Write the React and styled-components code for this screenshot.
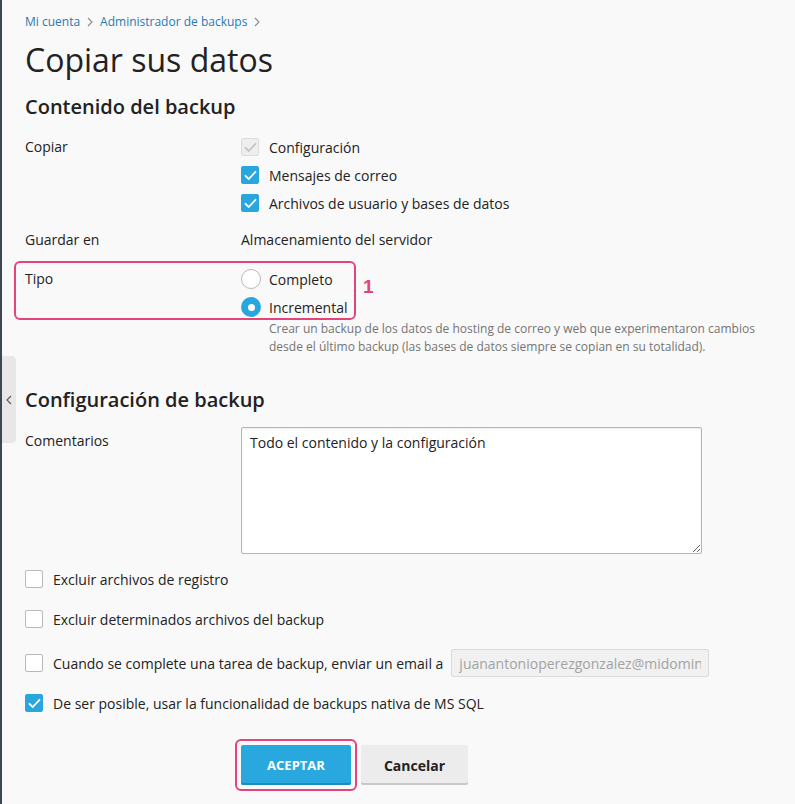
import React from "react";
import styled, { createGlobalStyle, css } from "styled-components";

const Global = createGlobalStyle`
  html, body { margin: 0; padding: 0; background: #f9f9f9; }
  body { font-family: "Open Sans", "Noto Sans", sans-serif; color: #222; font-size: 14px; }
  * { box-sizing: border-box; }
`;

const Shell = styled.div`
  position: relative;
  display: flex;
  min-height: 804px;
  background: #f9f9f9;
`;

const Rail = styled.div`
  width: 2px;
  flex: none;
  background: #3b4752;
`;

const SideTab = styled.button`
  position: absolute;
  left: 2px;
  top: 356px;
  width: 14px;
  height: 87px;
  border: none;
  padding: 0;
  background: #e7e7e7;
  border-radius: 0 4px 4px 0;
  display: flex;
  align-items: center;
  justify-content: center;
  color: #555;
`;

const Content = styled.main`
  flex: 1;
  padding: 14px 0 0 23px;
  display: flex;
  flex-direction: column;
`;

const Crumbs = styled.nav`
  display: flex;
  align-items: center;
  gap: 7px;
  font-size: 12px;
  line-height: 16px;
  height: 16px;
`;

const CrumbLink = styled.a`
  color: #1f7bb0;
  text-decoration: none;
`;

const CrumbSep = styled.span`
  color: #8a8a8a;
  display: inline-flex;
`;

const Title = styled.h1`
  margin: 10px 0 0;
  font-size: 32px;
  font-weight: 400;
  line-height: 40px;
  color: #222;
`;

const Heading = styled.h2`
  margin: ${(p) => p.$mt}px 0 0;
  font-size: 20px;
  font-weight: 600;
  line-height: 28px;
  color: #222;
`;

const Row = styled.div`
  position: relative;
  display: grid;
  grid-template-columns: 216px 1fr;
  margin-top: ${(p) => p.$mt || 0}px;
`;

const Label = styled.div`
  line-height: 28px;
  font-size: 14px;
  color: #222;
`;

const Field = styled.div`
  display: flex;
  flex-direction: column;
`;

const Option = styled.label`
  display: flex;
  align-items: center;
  gap: ${(p) => (p.$radio ? 8 : 10)}px;
  height: 28px;
  font-size: 14px;
  color: #222;
`;

const Value = styled.div`
  line-height: 28px;
`;

const Box = styled.span`
  width: 18px;
  height: 18px;
  flex: none;
  border-radius: 2px;
  display: inline-flex;
  align-items: center;
  justify-content: center;
  ${(p) =>
    p.$state === "on"
      ? css`
          background: #29a6de;
          border: 1px solid #29a6de;
          color: #fff;
        `
      : p.$state === "disabled"
      ? css`
          background: #eeeeee;
          border: 1px solid #dcdcdc;
          color: #c4c4c4;
        `
      : css`
          background: #fff;
          border: 1px solid #b9b9b9;
          color: transparent;
        `}
`;

const Radio = styled.span`
  width: 20px;
  height: 20px;
  flex: none;
  border-radius: 50%;
  display: inline-flex;
  align-items: center;
  justify-content: center;
  ${(p) =>
    p.$on
      ? css`
          background: #29a6de;
          &::after {
            content: "";
            width: 7px;
            height: 7px;
            border-radius: 50%;
            background: #fff;
          }
        `
      : css`
          background: #fff;
          border: 1px solid #b9b9b9;
        `}
`;

const Hint = styled.p`
  margin: -1px 0 0 28px;
  font-size: 12px;
  line-height: 18px;
  color: #747474;
`;

const Highlight = styled.div`
  position: absolute;
  left: ${(p) => p.$l}px;
  top: ${(p) => p.$t}px;
  width: ${(p) => p.$w}px;
  height: ${(p) => p.$h}px;
  border: 2px solid #e6437a;
  border-radius: 6px;
  pointer-events: none;
`;

const Marker = styled.span`
  position: absolute;
  left: 338px;
  top: 10px;
  font-size: 19px;
  font-weight: 700;
  line-height: 24px;
  color: #e6437a;
  font-family: "Liberation Sans", Arial, sans-serif;
`;

const TextArea = styled.textarea`
  width: 461px;
  height: 127px;
  border: 1px solid #b5b5b5;
  border-radius: 2px;
  background: #fff;
  box-shadow: inset 0 1px 2px rgba(0, 0, 0, 0.08);
  padding: 5px 8px;
  font-family: "Open Sans", "Noto Sans", sans-serif;
  font-size: 14px;
  line-height: 20px;
  color: #222;
  resize: both;
`;

const CheckLine = styled.label`
  display: flex;
  align-items: center;
  gap: 10px;
  min-height: 28px;
  margin-top: ${(p) => p.$mt}px;
  font-size: 14px;
  color: #222;
`;

const EmailInput = styled.input`
  width: 258px;
  height: 28px;
  margin-left: -2px;
  border: 1px solid #dadada;
  border-radius: 2px;
  background: #f1f1f1;
  color: #a3a3a3;
  padding: 0 7px;
  font-family: "Open Sans", "Noto Sans", sans-serif;
  font-size: 14px;
`;

const Actions = styled.div`
  position: relative;
  display: flex;
  gap: 10px;
  margin: 28px 0 0 216px;
`;

const Button = styled.button`
  height: 40px;
  border: none;
  border-radius: 2px;
  font-family: "Open Sans", "Noto Sans", sans-serif;
  font-weight: 700;
  cursor: pointer;
  ${(p) =>
    p.$primary
      ? css`
          width: 110px;
          background: #29a8df;
          color: #fff;
          font-size: 13px;
          box-shadow: inset 0 -2px 0 #1e8cc0;
        `
      : css`
          width: 107px;
          background: #ececec;
          color: #222;
          font-size: 14px;
          box-shadow: inset 0 -2px 0 #c9c9c9;
        `}
`;

const Check = () => (
  <svg width="13" height="11" viewBox="0 0 13 11" fill="none">
    <path d="M1.5 5.8 L4.8 9 L11.5 1.8" stroke="currentColor" strokeWidth="1.8" strokeLinecap="round" strokeLinejoin="round" />
  </svg>
);

const Chevron = ({ dir = "right" }) => (
  <svg width="6" height="10" viewBox="0 0 6 10" fill="none">
    <path
      d={dir === "right" ? "M1 1 L5 5 L1 9" : "M5 1 L1 5 L5 9"}
      stroke="currentColor"
      strokeWidth="1.1"
    />
  </svg>
);

const CheckBox = ({ state }) => (
  <Box $state={state}>
    <Check />
  </Box>
);

export default function App() {
  return (
    <>
      <Global />
      <Shell>
        <Rail />
        <SideTab aria-label="Mostrar">
          <Chevron dir="left" />
        </SideTab>
        <Content>
          <Crumbs>
            <CrumbLink href="#">Mi cuenta</CrumbLink>
            <CrumbSep><Chevron /></CrumbSep>
            <CrumbLink href="#">Administrador de backups</CrumbLink>
            <CrumbSep><Chevron /></CrumbSep>
          </Crumbs>
          <Title>Copiar sus datos</Title>

          <Heading $mt={13}>Contenido del backup</Heading>

          <Row $mt={12}>
            <Label>Copiar</Label>
            <Field>
              <Option><CheckBox state="disabled" />Configuración</Option>
              <Option><CheckBox state="on" />Mensajes de correo</Option>
              <Option><CheckBox state="on" />Archivos de usuario y bases de datos</Option>
            </Field>
          </Row>

          <Row $mt={9}>
            <Label>Guardar en</Label>
            <Value>Almacenamiento del servidor</Value>
          </Row>

          <Row $mt={11}>
            <Label>Tipo</Label>
            <Field>
              <Option $radio><Radio />Completo</Option>
              <Option $radio><Radio $on />Incremental</Option>
              <Hint>
                Crear un backup de los datos de hosting de correo y web que experimentaron cambios
                <br />
                desde el último backup (las bases de datos siempre se copian en su totalidad).
              </Hint>
            </Field>
            <Highlight $l={-11} $t={-4} $w={342} $h={59} />
            <Marker>1</Marker>
          </Row>

          <Heading $mt={30}>Configuración de backup</Heading>

          <Row $mt={13}>
            <Label>Comentarios</Label>
            <div>
              <TextArea defaultValue="Todo el contenido y la configuración" />
            </div>
          </Row>

          <CheckLine $mt={7}><CheckBox />Excluir archivos de registro</CheckLine>
          <CheckLine $mt={12}><CheckBox />Excluir determinados archivos del backup</CheckLine>
          <CheckLine $mt={16}>
            <CheckBox />
            Cuando se complete una tarea de backup, enviar un email a
            <EmailInput disabled value="juanantonioperezgonzalez@midominio.com" readOnly />
          </CheckLine>
          <CheckLine $mt={12}><CheckBox state="on" />De ser posible, usar la funcionalidad de backups nativa de MS SQL</CheckLine>

          <Actions>
            <Highlight $l={-6} $t={-6} $w={122} $h={52} />
            <Button $primary>ACEPTAR</Button>
            <Button>Cancelar</Button>
          </Actions>
        </Content>
      </Shell>
    </>
  );
}
